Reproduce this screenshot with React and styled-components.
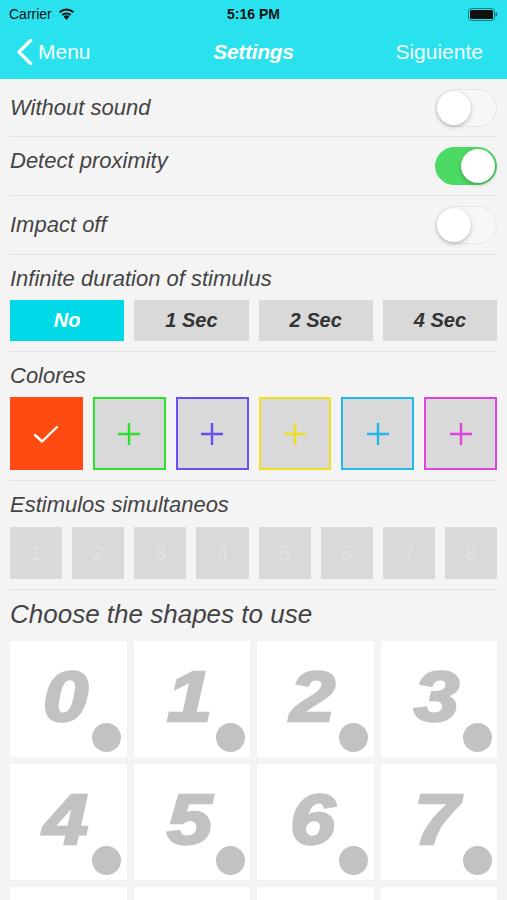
import React, { useState } from 'react';
import styled, { createGlobalStyle } from 'styled-components';

const GlobalStyle = createGlobalStyle`
    body {
        margin: 0;
        background-color: #f4f4f4;
        font-family: "Liberation Sans", Arial, sans-serif;
    }
`;

const Page = styled.div`
    width: 507px;
    height: 900px;
    overflow: hidden;
    background-color: #f4f4f4;
`;

const Header = styled.header`
    background-color: #2ae2ee;
    height: 79px;
    display: flex;
    flex-direction: column;
`;

const StatusBar = styled.div`
    height: 28px;
    display: grid;
    grid-template-columns: 1fr auto 1fr;
    align-items: center;
    padding: 0 9px;
    font-size: 14px;
    color: #111;
`;

const StatusLeft = styled.div`
    display: flex;
    align-items: center;
    gap: 6px;
`;

const StatusTime = styled.div`
    font-weight: bold;
`;

const StatusRight = styled.div`
    display: flex;
    justify-content: flex-end;
`;

const NavBar = styled.div`
    flex: 1;
    display: grid;
    grid-template-columns: 1fr auto 1fr;
    align-items: center;
    padding: 0 16px 4px;
    color: #fff;
    font-size: 21px;
`;

const BackButton = styled.div`
    display: flex;
    align-items: center;
    gap: 5px;
    color: #f4fdff;
`;

const NavTitle = styled.div`
    font-weight: bold;
    font-style: italic;
    font-size: 21px;
    letter-spacing: -0.3px;
`;

const NavAction = styled.div`
    text-align: right;
    color: #f4fdff;
    padding-right: 8px;
`;

const Content = styled.main`
    padding: 0 10px;
`;

const ToggleRow = styled.div`
    height: ${(p) => p.$height || 58}px;
    display: flex;
    align-items: center;
    justify-content: space-between;
    border-bottom: 1px solid #e2e2e2;
`;

const Label = styled.div`
    font-style: italic;
    font-size: 22px;
    line-height: 26px;
    color: #444;
    margin-top: ${(p) => p.$shift || 0}px;
`;

const SwitchTrack = styled.div`
    width: 62px;
    height: 38px;
    border-radius: 19px;
    box-sizing: border-box;
    background-color: ${(p) => (p.$on ? '#4cd964' : '#f7f7f7')};
    border: 1px solid ${(p) => (p.$on ? '#4cd964' : '#e6e6e6')};
    display: flex;
    align-items: center;
    justify-content: ${(p) => (p.$on ? 'flex-end' : 'flex-start')};
    padding: 1px;
    cursor: pointer;
`;

const SwitchKnob = styled.div`
    width: 34px;
    height: 34px;
    border-radius: 50%;
    background-color: #fff;
    box-shadow: 0 2px 4px rgba(0, 0, 0, 0.22), 0 0 1px rgba(0, 0, 0, 0.15);
`;

const Section = styled.section`
    padding: 11px 0 10px;
    border-bottom: 1px solid #e2e2e2;
`;

const Choices = styled.div`
    display: grid;
    grid-template-columns: repeat(${(p) => p.$cols}, 1fr);
    gap: 10px;
    margin-top: ${(p) => p.$top}px;
`;

const DurationButton = styled.div`
    height: 41px;
    display: flex;
    align-items: center;
    justify-content: center;
    font-weight: bold;
    font-style: italic;
    font-size: 20px;
    background-color: ${(p) => (p.$active ? '#00d9e8' : '#d9d9d9')};
    color: ${(p) => (p.$active ? '#fff' : '#333')};
    cursor: pointer;
`;

const ColorBox = styled.div`
    height: 73px;
    box-sizing: border-box;
    display: flex;
    align-items: center;
    justify-content: center;
    background-color: ${(p) => (p.$selected ? p.$color : '#d9d9d9')};
    border: 2px solid ${(p) => p.$color};
    cursor: pointer;
`;

const CountBox = styled.div`
    height: 52px;
    display: flex;
    align-items: center;
    justify-content: center;
    background-color: #d9d9d9;
    color: #e2e2e2;
    font-size: 20px;
`;

const BigLabel = styled.div`
    font-style: italic;
    font-size: 26px;
    line-height: 30px;
    color: #444;
    margin-top: 9px;
`;

const ShapeGrid = styled.div`
    display: grid;
    grid-template-columns: repeat(4, 1fr);
    gap: 7px;
    margin-top: 12px;
`;

const ShapeTile = styled.div`
    position: relative;
    height: 116px;
    background-color: #fff;
    box-shadow: 0 0 1px rgba(0, 0, 0, 0.06);
    overflow: hidden;
`;

const ShapeNumber = styled.span`
    position: absolute;
    left: 33px;
    top: 21px;
    font-weight: bold;
    font-style: italic;
    font-size: 70px;
    line-height: 70px;
    color: #c2c2c2;
    -webkit-text-stroke: 2.5px #c2c2c2;
    transform: scaleX(1.16);
    transform-origin: left top;
`;

const ShapeDot = styled.span`
    position: absolute;
    left: 82px;
    top: 82px;
    width: 29px;
    height: 29px;
    border-radius: 50%;
    background-color: #c2c2c2;
`;

const WifiIcon = () => (
    <svg width="17" height="12" viewBox="0 0 17 12">
        <path d="M8.5 12 L5.6 8.6 A4.3 4.3 0 0 1 11.4 8.6 Z" fill="#111" />
        <path d="M3.6 6.3 A7.3 7.3 0 0 1 13.4 6.3 L12.1 7.8 A5.4 5.4 0 0 0 4.9 7.8 Z" fill="#111" />
        <path d="M0.9 3.5 A11 11 0 0 1 16.1 3.5 L14.7 5.1 A8.9 8.9 0 0 0 2.3 5.1 Z" fill="#111" />
    </svg>
);

const BatteryIcon = () => (
    <svg width="30" height="13" viewBox="0 0 30 13">
        <rect x="0.5" y="0.5" width="26" height="12" rx="3" fill="none" stroke="#111" strokeOpacity="0.5" />
        <rect x="2" y="2" width="23" height="9" rx="1.5" fill="#111" />
        <rect x="27.5" y="4.5" width="1.8" height="4" rx="0.8" fill="#111" fillOpacity="0.5" />
    </svg>
);

const Chevron = () => (
    <svg width="17" height="26" viewBox="0 0 17 26">
        <path d="M14.5 1.5 L3 13 L14.5 24.5" fill="none" stroke="#f4fdff" strokeWidth="3.2" strokeLinecap="round" strokeLinejoin="round" />
    </svg>
);

const CheckIcon = () => (
    <svg width="26" height="20" viewBox="0 0 26 20">
        <path d="M2 11 L9 17.5 L24 3" fill="none" stroke="#fff" strokeWidth="2.4" strokeLinecap="round" strokeLinejoin="round" />
    </svg>
);

const PlusIcon = ({ color }) => (
    <svg width="24" height="24" viewBox="0 0 24 24">
        <path d="M12 1 V23 M1 12 H23" stroke={color} strokeWidth="2.4" />
    </svg>
);

const Switch = ({ on, onToggle }) => (
    <SwitchTrack $on={on} onClick={onToggle}>
        <SwitchKnob />
    </SwitchTrack>
);

const durations = ['No', '1 Sec', '2 Sec', '4 Sec'];
const colors = ['#ff4a12', '#2ee02e', '#6a4ff0', '#f0e020', '#22b8ee', '#dd44dd'];

const App = () => {
    const [toggles, setToggles] = useState({ sound: false, proximity: true, impact: false });
    const [duration, setDuration] = useState('No');
    const [selectedColors, setSelectedColors] = useState([0]);

    const flip = (key) => setToggles({ ...toggles, [key]: !toggles[key] });
    const toggleColor = (i) =>
        setSelectedColors(selectedColors.includes(i) ? selectedColors.filter((c) => c !== i) : [...selectedColors, i]);

    return (
        <Page>
            <GlobalStyle />
            <Header>
                <StatusBar>
                    <StatusLeft>
                        Carrier <WifiIcon />
                    </StatusLeft>
                    <StatusTime>5:16 PM</StatusTime>
                    <StatusRight>
                        <BatteryIcon />
                    </StatusRight>
                </StatusBar>
                <NavBar>
                    <BackButton>
                        <Chevron /> Menu
                    </BackButton>
                    <NavTitle>Settings</NavTitle>
                    <NavAction>Siguiente</NavAction>
                </NavBar>
            </Header>

            <Content>
                <ToggleRow $height={57}>
                    <Label>Without sound</Label>
                    <Switch on={toggles.sound} onToggle={() => flip('sound')} />
                </ToggleRow>
                <ToggleRow>
                    <Label $shift={-10}>Detect proximity</Label>
                    <Switch on={toggles.proximity} onToggle={() => flip('proximity')} />
                </ToggleRow>
                <ToggleRow>
                    <Label>Impact off</Label>
                    <Switch on={toggles.impact} onToggle={() => flip('impact')} />
                </ToggleRow>

                <Section>
                    <Label>Infinite duration of stimulus</Label>
                    <Choices $cols={4} $top={8}>
                        {durations.map((d) => (
                            <DurationButton key={d} $active={duration === d} onClick={() => setDuration(d)}>
                                {d}
                            </DurationButton>
                        ))}
                    </Choices>
                </Section>

                <Section>
                    <Label>Colores</Label>
                    <Choices $cols={6} $top={8}>
                        {colors.map((c, i) => {
                            const selected = selectedColors.includes(i);
                            return (
                                <ColorBox key={c} $color={c} $selected={selected} onClick={() => toggleColor(i)}>
                                    {selected ? <CheckIcon /> : <PlusIcon color={c} />}
                                </ColorBox>
                            );
                        })}
                    </Choices>
                </Section>

                <Section>
                    <Label>Estimulos simultaneos</Label>
                    <Choices $cols={8} $top={9}>
                        {[1, 2, 3, 4, 5, 6, 7, 8].map((n) => (
                            <CountBox key={n}>{n}</CountBox>
                        ))}
                    </Choices>
                </Section>

                <BigLabel>Choose the shapes to use</BigLabel>
                <ShapeGrid>
                    {[0, 1, 2, 3, 4, 5, 6, 7, 8, 9, 10, 11].map((n) => (
                        <ShapeTile key={n}>
                            <ShapeNumber>{n}</ShapeNumber>
                            <ShapeDot />
                        </ShapeTile>
                    ))}
                </ShapeGrid>
            </Content>
        </Page>
    );
};

export default App;
